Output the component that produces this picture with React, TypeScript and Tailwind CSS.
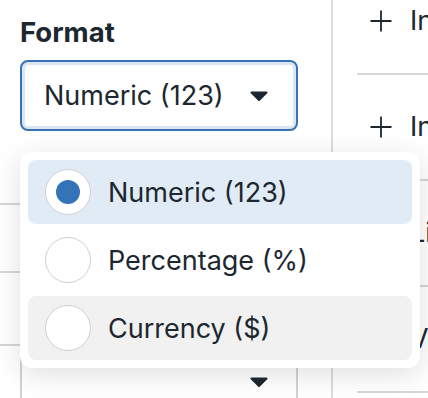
const font = { fontFamily: 'Inter, "Noto Sans", sans-serif' };

function Caret() {
  return (
    <svg width="18" height="10" viewBox="0 0 18 10" className="shrink-0">
      <path d="M1.5 1.5 L16.5 1.5 L9 9 Z" fill="#1c2730" stroke="#1c2730" strokeWidth="2" strokeLinejoin="round" />
    </svg>
  );
}

function PlusIcon() {
  return (
    <svg width="22" height="22" viewBox="0 0 22 22" className="shrink-0">
      <path d="M11 0.5 V21.5 M0.5 11 H21.5" stroke="#1c2730" strokeWidth="1.8" fill="none" />
    </svg>
  );
}

const options = [
  { label: 'Numeric (123)', selected: true },
  { label: 'Percentage (%)', selected: false },
  { label: 'Currency ($)', selected: false, hover: true },
];

const sideRows = ['Insert', 'Insert', 'Link', 'View'];

export default function App() {
  return (
    <div className="relative w-[428px] h-[398px] overflow-hidden bg-white text-[#1c2730]" style={font}>
      <div className="flex h-full">
        {/* Left panel */}
        <div className="w-[333px] shrink-0 border-r-2 border-[#dcdce0]">
          <h2 className="pl-5 pt-[16px] text-[27.5px] font-bold leading-[32px]">Format</h2>
          <div className="ml-5 mt-[12px] w-[278px] h-[71px] rounded-lg border-2 border-[#3672b4] shadow-[inset_0_0_0_3px_#dbe6f2] flex items-center justify-between pl-[22px] pr-[28px]">
            <span className="text-[27px] leading-none">Numeric (123)</span>
            <Caret />
          </div>
          <div className="mt-[72px] border-b-2 border-[#d6d6da]" />
          <div className="h-[68px] border-b-2 border-[#d6d6da]" />
          <div className="h-[73px] border-b-2 border-[#d6d6da]" />
          <div className="ml-5 w-[278px] h-[71px] rounded-lg border-2 border-[#cfd2d6] flex items-center justify-end pr-[28px]">
            <Caret />
          </div>
        </div>

        {/* Right panel */}
        <div className="flex-1 pl-[24px] -mt-[31px]">
          {sideRows.map((r, i) => (
            <div key={i} className="h-[106px] border-b-2 border-[#d6d6da] flex items-center gap-[18px] pl-[13px]">
              <PlusIcon />
              <span className="text-[27px] whitespace-nowrap">{r}</span>
            </div>
          ))}
        </div>
      </div>

      {/* Dropdown popover */}
      <div className="absolute left-5 top-[152px] w-[400px] rounded-xl bg-white p-2 flex flex-col gap-1 shadow-[0_6px_28px_rgba(0,0,0,0.13)]">
        {options.map((o) => (
          <div
            key={o.label}
            className={
              'h-16 rounded-lg flex items-center pl-[17px] gap-[17px] ' +
              (o.selected ? 'bg-[#e1ebf5]' : o.hover ? 'bg-[#f1f1f1]' : 'bg-white')
            }
          >
            <div className="w-[46px] h-[46px] rounded-full bg-white border-[1.5px] border-[#ccd0d4] flex items-center justify-center shrink-0">
              {o.selected && <div className="w-6 h-6 rounded-full bg-[#3573b7]" />}
            </div>
            <span className="text-[27px] leading-none">{o.label}</span>
          </div>
        ))}
      </div>
    </div>
  );
}
